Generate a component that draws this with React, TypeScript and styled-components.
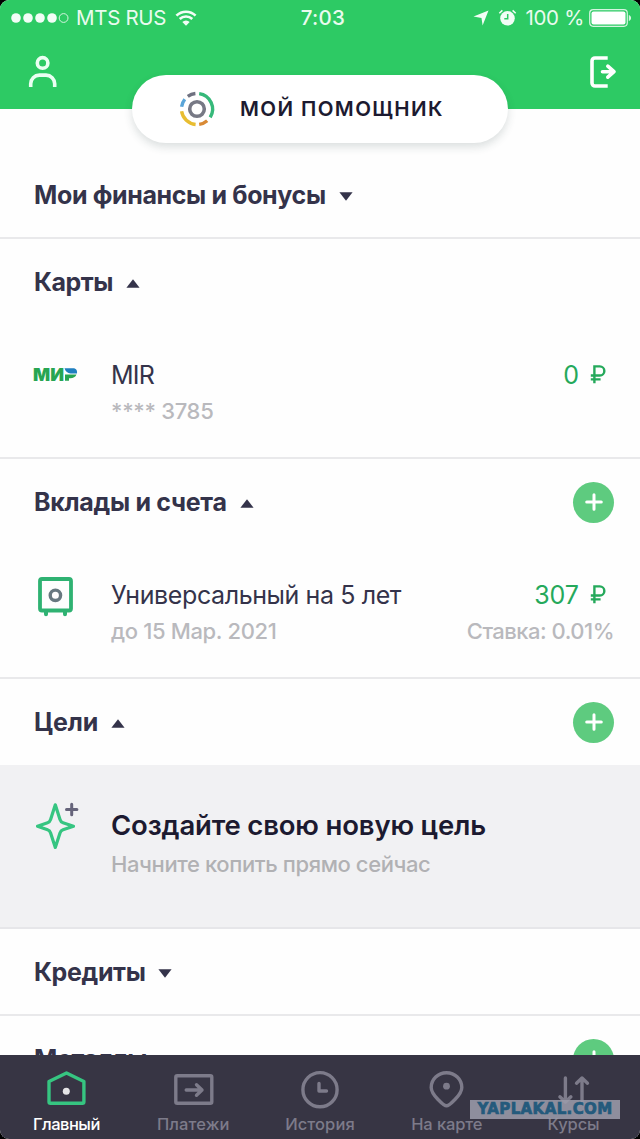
import React from "react";
import styled, { createGlobalStyle } from "styled-components";

const GlobalStyle = createGlobalStyle`
  * { box-sizing: border-box; }
  html, body { margin: 0; background: #000; }
  body { font-family: Inter, "Liberation Sans", sans-serif; color: #34334a; overflow: hidden; }
  svg { overflow: visible; flex: none; }
`;

const Screen = styled.div`
  width: 640px;
  height: 1139px;
  display: flex;
  flex-direction: column;
  overflow: hidden;
  border-radius: 9px;
  background: #fefefe;
`;

const Header = styled.header`
  flex: none;
  height: 109px;
  background: #2dca64;
  color: #fff;
`;

const StatusBar = styled.div`
  height: 36px;
  padding: 0 8px 0 11px;
  display: grid;
  grid-template-columns: 1fr auto 1fr;
  align-items: center;
  font-size: 20.5px;
  line-height: 36px;
  color: #e9fbef;
`;

const StatusGroup = styled.div<{ $end?: boolean }>`
  display: flex;
  align-items: center;
  justify-content: ${(p) => (p.$end ? "flex-end" : "flex-start")};
`;

const StatusText = styled.span<{ $spacing?: number; $left?: number; $right?: number }>`
  letter-spacing: ${(p) => p.$spacing ?? 0}px;
  margin-left: ${(p) => p.$left ?? 0}px;
  margin-right: ${(p) => p.$right ?? 0}px;
  white-space: nowrap;
`;

const AlarmIcon = styled.svg`
  margin-left: 9px;
`;

const Clock = styled.span`
  font-weight: 500;
  letter-spacing: 0.3px;
  margin-left: 3px;
`;

const HeaderActions = styled.div`
  height: 73px;
  padding: 18px 23px 0 27px;
  display: flex;
  justify-content: space-between;
  align-items: flex-start;
`;

const AssistantButton = styled.button`
  flex: none;
  align-self: center;
  position: relative;
  width: 376px;
  height: 68px;
  margin: -34px 0 -34px;
  padding: 0 0 0 46px;
  display: flex;
  align-items: center;
  gap: 24px;
  border: 0;
  border-radius: 34px;
  background: #fff;
  box-shadow: 0 4px 9px rgba(40, 60, 60, 0.16);
  font: 600 20.5px/68px Inter, "Liberation Sans", sans-serif;
  letter-spacing: 1.4px;
  color: #1c1a30;
  white-space: nowrap;
`;

const Content = styled.main`
  flex: 1;
  min-height: 0;
  overflow: hidden;
`;

const Section = styled.section<{ $height: number; $top?: number }>`
  height: ${(p) => p.$height}px;
  padding-top: ${(p) => p.$top ?? 0}px;
  border-bottom: 2px solid #e9e9eb;
`;

const SectionHead = styled.div`
  height: 86px;
  padding: 0 26px 0 34px;
  display: flex;
  align-items: center;
`;

const Title = styled.h2<{ $spacing?: number }>`
  margin: 0;
  font-size: 25px;
  line-height: 34px;
  font-weight: 700;
  letter-spacing: ${(p) => p.$spacing ?? -0.36}px;
  color: #34334a;
  white-space: nowrap;
`;

const Caret = styled.svg`
  margin: 2px 0 0 13px;
`;

const AddButton = styled.button`
  width: 41px;
  height: 41px;
  margin-left: auto;
  padding: 0;
  border: 0;
  border-radius: 50%;
  background: #5ecb7f;
  display: grid;
  place-items: center;
`;

const Row = styled.div`
  padding: 30px 26px 0 33px;
  display: flex;
  align-items: flex-start;
`;

const RowIcon = styled.div<{ $top?: number }>`
  width: 78px;
  padding-top: ${(p) => p.$top ?? 0}px;
  flex: none;
  display: flex;
`;

const RowBody = styled.div<{ $end?: boolean }>`
  display: flex;
  flex-direction: column;
  align-items: ${(p) => (p.$end ? "flex-end" : "flex-start")};
  margin-left: ${(p) => (p.$end ? "auto" : "0")};
`;

const Name = styled.div<{ $spacing?: number }>`
  font-size: 25px;
  line-height: 40px;
  letter-spacing: ${(p) => p.$spacing ?? 0}px;
  white-space: nowrap;
`;

const Note = styled.div<{ $spacing?: number }>`
  font-size: 22px;
  line-height: 32px;
  font-weight: 500;
  letter-spacing: ${(p) => p.$spacing ?? 0}px;
  color: #b9b9bd;
  white-space: nowrap;
`;

const Amount = styled.div`
  display: flex;
  align-items: center;
  gap: 11px;
  padding-right: 8px;
  font-size: 25px;
  line-height: 40px;
  color: #25a95b;
`;

const Promo = styled.section`
  height: 164px;
  padding: 40px 26px 0 33px;
  display: flex;
  align-items: flex-start;
  background: #f1f1f3;
  border-bottom: 2px solid #e6e6e9;
`;

const PromoTitle = styled.div`
  font-size: 27.5px;
  line-height: 40px;
  font-weight: 600;
  letter-spacing: -0.17px;
  color: #1c1a30;
  white-space: nowrap;
`;

const PromoNote = styled(Note)`
  margin-top: 2px;
  line-height: 34px;
  color: #b1b1b4;
`;

const MirWord = styled.text`
  font: 900 17.5px Inter, "Liberation Sans", sans-serif;
  fill: #27a552;
`;

const TabBar = styled.nav`
  position: relative;
  flex: none;
  height: 84px;
  padding: 0 3px;
  display: grid;
  grid-template-columns: repeat(5, 1fr);
  background: #373544;
`;

const Tab = styled.a<{ $active?: boolean }>`
  display: flex;
  flex-direction: column;
  align-items: center;
  padding-top: 13px;
  color: ${(p) => (p.$active ? "#fff" : "#7d7b8a")};
`;

const TabLabel = styled.span<{ $spacing?: number }>`
  margin-top: 2px;
  font-size: 16.5px;
  line-height: 24px;
  font-weight: 500;
  letter-spacing: ${(p) => p.$spacing ?? 0}px;
`;

const Watermark = styled.div`
  position: absolute;
  left: 470px;
  top: 45px;
  width: 150px;
  height: 19px;
  background: rgba(155, 155, 170, 0.88);
  color: #245a7c;
  font: 900 15px/19px "DejaVu Sans", sans-serif;
  letter-spacing: 0.4px;
  -webkit-text-stroke: 0.7px #245a7c;
  text-align: center;
`;

const Triangle = ({ up }: { up?: boolean }) => (
  <Caret width="14" height="9" viewBox="0 0 14 9">
    <path d={up ? "M7 .3 13.6 8.7H.4Z" : "M.4.3h13.2L7 8.7Z"} fill="#34334a" />
  </Caret>
);

const Plus = () => (
  <AddButton aria-label="+">
    <svg width="18" height="18" viewBox="0 0 18 18" stroke="#fff" strokeWidth="3" strokeLinecap="round">
      <path d="M9 1.7v14.6M1.7 9h14.6" />
    </svg>
  </AddButton>
);

const Ruble = () => (
  <svg width="16" height="20" viewBox="0 0 16 20" fill="none" stroke="#25a95b" strokeWidth="2.4">
    <path d="M4.4 18.200V1.400h5.400a4.400 4.400 0 0 1 0 9.100H.8M.8 14.400h9.800" />
  </svg>
);

const SignalDots = () => (
  <svg width="58" height="12" viewBox="0 0 58 12">
    {[5, 17, 29, 41].map((x) => (
      <circle key={x} cx={x} cy="6" r="4.8" fill="#f2fdf6" />
    ))}
    <circle cx="52.6" cy="6" r="4.4" fill="none" stroke="#d5f5e0" />
  </svg>
);

const Wifi = () => (
  <svg width="22" height="17" viewBox="0 0 22 17" fill="none" stroke="#f2fdf6" strokeWidth="2.6">
    <path d="M1.4 5.6a13.8 13.8 0 0 1 19.2 0M4.7 9a9 9 0 0 1 12.6 0" />
    <path d="M11 15.8 7.3 12a5.3 5.3 0 0 1 7.4 0Z" fill="#f2fdf6" stroke="none" />
  </svg>
);

const Helper = () => (
  <svg width="38" height="38" viewBox="-19 -19 38 38" fill="none" strokeWidth="3.4">
    <circle r="7.3" stroke="#777985" strokeWidth="3.6" />
    <path d="M2.2-15.4A15.6 15.6 0 0 1 13.2 8.3" stroke="#36b97a" />
    <path d="M10.2 11.8A15.6 15.6 0 0 1 2.2 15.4" stroke="#d98a35" />
    <path d="M-1.4 15.5A15.6 15.6 0 0 1-15.4 2.3" stroke="#e8bd31" />
    <path d="M-15.4-2.2A15.6 15.6 0 0 1-12.2-9.7" stroke="#5aa5d8" />
    <path d="M-9.2-12.6A15.6 15.6 0 0 1-1.6-15.5" stroke="#6f7180" />
  </svg>
);

const tabs = [
  {
    label: "Главный",
    spacing: -0.5,
    icon: (
      <>
        <path d="M4 13.5 21.5 5 38.9 13.5v20.3a1.5 1.5 0 0 1-1.5 1.5H5.5a1.5 1.5 0 0 1-1.5-1.5Z" stroke="#36c581" />
        <circle cx="21.3" cy="23.3" r="3.5" fill="#e4e4e6" stroke="none" />
      </>
    ),
  },
  {
    label: "Платежи",
    spacing: 0.1,
    icon: (
      <>
        <rect x="3.8" y="7.7" width="36" height="27.6" rx="1.5" />
        <path d="M14.2 22h15.8M24.5 16.7l5.5 5.3-5.5 5.3" strokeLinecap="round" />
      </>
    ),
  },
  {
    label: "История",
    spacing: 0.1,
    icon: (
      <>
        <circle cx="21" cy="21.7" r="17.1" />
        <path d="M20 15.5v7.5h7.5" strokeLinecap="round" />
      </>
    ),
  },
  {
    label: "На карте",
    spacing: -0.1,
    icon: (
      <>
        <path d="M20.5 37.8C18.3 37.8 5.2 27 5.2 19.4a15.3 14.7 0 0 1 30.6 0C35.8 27 22.7 37.8 20.5 37.8Z" />
        <circle cx="20.5" cy="18.2" r="3.4" fill="#7d7b8a" stroke="none" />
      </>
    ),
  },
  {
    label: "Курсы",
    spacing: -0.1,
    icon: (
      <path d="M12.4 10v23.5M6.9 28.8l5.5 5.2 5.5-5.2M29 34V10M23.5 15.2l5.500-5.200 5.500 5.200" strokeLinecap="round" />
    ),
  },
];

export default function App() {
  return (
    <>
      <GlobalStyle />
      <Screen>
        <Header>
          <StatusBar>
            <StatusGroup>
              <SignalDots />
              <StatusText $left={7} $right={9} $spacing={-0.3}>MTS RUS</StatusText>
              <Wifi />
            </StatusGroup>
            <Clock>7:03</Clock>
            <StatusGroup $end>
              <svg width="16" height="16" viewBox="0 0 16 16">
                <path d="M15.5.5 9.6 15.5 8.5 8 .5 6.500Z" fill="#f2fdf6" />
              </svg>
              <AlarmIcon width="19" height="18" viewBox="0 0 19 18">
                <circle cx="9.5" cy="9.3" r="7.3" fill="#f2fdf6" />
                <path d="M1.3 4.3 4.4 1.4M17.7 4.3 14.6 1.4" stroke="#f2fdf6" strokeWidth="1.5" />
                <path d="M9.7 5v4.8H6.3" stroke="#2dca64" strokeWidth="1.5" fill="none" />
              </AlarmIcon>
              <StatusText $left={8} $right={5} $spacing={-0.3}>100 %</StatusText>
              <svg width="43" height="18" viewBox="0 0 43 18">
                <rect x=".7" y=".7" width="37.6" height="16.6" rx="3.5" fill="none" stroke="#d5f5e0" strokeWidth="1.2" />
                <rect x="2.5" y="2.5" width="34" height="13" rx="2" fill="#fff" />
                <path d="M39.8 6v6c3-.8 3-5.2 0-6Z" fill="#d5f5e0" />
              </svg>
            </StatusGroup>
          </StatusBar>
          <HeaderActions>
            <svg width="32" height="36" viewBox="0 0 32 36" fill="none" stroke="#eafff2" strokeWidth="3.6">
              <circle cx="15.6" cy="8.9" r="5.3" />
              <path d="M3.7 33v-3.2a8.7 8.7 0 0 1 8.7-8.7h6.6a8.7 8.7 0 0 1 8.7 8.7V33" />
            </svg>
            <svg width="30" height="36" viewBox="0 0 30 36" fill="none" stroke="#fff" strokeWidth="3.6">
              <path d="M20.7 4H8a3 3 0 0 0-3 3v22a3 3 0 0 0 3 3h12.7" />
              <path d="M15.5 17.7h11M20.8 12.2l6.2 5.5-6.2 5.5" strokeLinecap="round" strokeLinejoin="round" />
            </svg>
          </HeaderActions>
        </Header>
        <AssistantButton>
          <Helper />
          МОЙ ПОМОЩНИК
        </AssistantButton>
        <Content>
          <Section $height={130} $top={43}>
            <SectionHead>
              <Title>Мои финансы и бонусы</Title>
              <Triangle />
            </SectionHead>
          </Section>
          <Section $height={220}>
            <SectionHead>
              <Title $spacing={-0.5}>Карты</Title>
              <Triangle up />
            </SectionHead>
            <Row>
              <RowIcon $top={11}>
                <svg width="46" height="18" viewBox="0 0 46 18">
                  <MirWord x="0" y="14.8" textLength="31" lengthAdjust="spacingAndGlyphs">МИ</MirWord>
                  <path d="M32 8.5h11.5c-1 2.6-3.4 3.7-6 3.7h-1.5V14.8h-4Z" fill="#27a552" />
                  <path d="M31.5 2.3h8.5c2.7 0 4.5 1.8 4 5.2h-6.5c-2.8 0-5-2-6-5.2Z" fill="#1f7fc0" />
                </svg>
              </RowIcon>
              <RowBody>
                <Name $spacing={-0.8}>MIR</Name>
                <Note $spacing={-0.3}>**** 3785</Note>
              </RowBody>
              <RowBody $end>
                <Amount>0 <Ruble /></Amount>
              </RowBody>
            </Row>
          </Section>
          <Section $height={220}>
            <SectionHead>
              <Title $spacing={-0.3}>Вклады и счета</Title>
              <Triangle up />
              <Plus />
            </SectionHead>
            <Row>
              <RowIcon>
                <svg width="42" height="42" viewBox="0 0 42 42" fill="none" stroke="#2fb272" strokeWidth="3.8">
                  <rect x="7" y="4" width="31" height="31.5" rx="2" />
                  <path d="M13 37v2.2M32 37v2.2" strokeWidth="4" strokeLinecap="round" />
                  <circle cx="22.4" cy="20.3" r="5.2" stroke="#687880" strokeWidth="3.4" />
                </svg>
              </RowIcon>
              <RowBody>
                <Name $spacing={-0.4}>Универсальный на 5 лет</Name>
                <Note $spacing={-0.35}>до 15 Мар. 2021</Note>
              </RowBody>
              <RowBody $end>
                <Amount>307 <Ruble /></Amount>
                <Note $spacing={-0.5}>Ставка: 0.01%</Note>
              </RowBody>
            </Row>
          </Section>
          <SectionHead>
            <Title $spacing={-0.1}>Цели</Title>
            <Triangle up />
            <Plus />
          </SectionHead>
          <Promo>
            <RowIcon>
              <svg width="48" height="48" viewBox="0 0 48 48" fill="none" strokeLinejoin="round" strokeLinecap="round">
                <path d="M22.3-.2 27 14.5Q27.8 17 30 17.7L40.5 21.2 30 24.7Q27.8 25.4 27 27.9L22.3 42.4 17.6 27.9Q16.8 25.4 14.6 24.7L4.5 21.2 14.6 17.7Q16.8 17 17.6 14.500Z" stroke="#36c581" strokeWidth="3.2" />
                <path d="M38.7-.7v10.4M33.5 4.5h10.400" stroke="#66647a" strokeWidth="3" />
              </svg>
            </RowIcon>
            <RowBody>
              <PromoTitle>Создайте свою новую цель</PromoTitle>
              <PromoNote $spacing={-0.4}>Начните копить прямо сейчас</PromoNote>
            </RowBody>
          </Promo>
          <Section $height={87}>
            <SectionHead>
              <Title>Кредиты</Title>
              <Triangle />
            </SectionHead>
          </Section>
          <SectionHead>
            <Title>Металлы</Title>
            <Plus />
          </SectionHead>
        </Content>
        <TabBar>
          {tabs.map((t, i) => (
            <Tab key={t.label} $active={i === 0}>
              <svg width="42" height="42" viewBox="0 0 42 42" fill="none" stroke="#7d7b8a" strokeWidth="3.4" strokeLinejoin="round">
                {t.icon}
              </svg>
              <TabLabel $spacing={t.spacing}>{t.label}</TabLabel>
            </Tab>
          ))}
          <Watermark>YAPLAKAL.COM</Watermark>
        </TabBar>
      </Screen>
    </>
  );
}
